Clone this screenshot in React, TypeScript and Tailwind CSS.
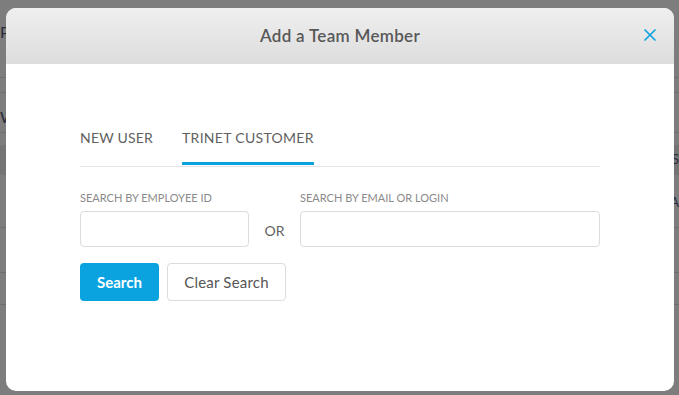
import { X } from 'lucide-react'

export default function App() {
    return (
        <div className="relative w-[679px] h-[395px] overflow-hidden bg-[#7d7d7d] font-['Lato',sans-serif]">
            {/* page underneath the overlay */}
            <div className="flex flex-col text-[#2b2b3a]">
                <div className="h-[78px] border-b border-[#6e6e6e] pt-[20px] px-0 text-[16px]">P</div>
                <div className="h-[15px] border-b border-[#6e6e6e]" />
                <div className="h-[40px] border-b border-[#6e6e6e] pt-[12px] text-[16px]">W</div>
                <div className="h-[12px]" />
                <div className="h-[30px] bg-[#747474] flex justify-end items-center text-[13px]">S</div>
                <div className="h-[53px] border-b border-[#6e6e6e] flex justify-end pt-[18px] text-[13px]">A</div>
                <div className="h-[45px] border-b border-[#6e6e6e]" />
                <div className="h-[32px] border-b border-[#6e6e6e]" />
            </div>

            {/* modal */}
            <div className="absolute left-[6px] top-[8px] w-[668px] h-[383px] bg-white rounded-[10px] overflow-hidden flex flex-col">
                <div className="h-[56px] shrink-0 bg-gradient-to-b from-[#efefef] to-[#dddddd] flex items-center justify-center relative">
                    <h2 className="text-[17px] font-semibold text-[#585858] tracking-[0.3px]">Add a Team Member</h2>
                    <button className="absolute right-[14px] top-[17px] text-[#0aa3e0]">
                        <X size={20} strokeWidth={2} />
                    </button>
                </div>

                <div className="px-[74px] pt-[62px]">
                    <div className="flex gap-[29px] border-b border-[#e3e3e3] h-[41px]">
                        <div className="text-[14px] text-[#616161] tracking-[0.2px] pt-[1px]">NEW USER</div>
                        <div className="text-[14px] text-[#616161] tracking-[0.3px] pt-[1px] border-b-[3px] border-[#0aa3e0] h-[39px] -mb-[1px]">TRINET CUSTOMER</div>
                    </div>

                    <div className="flex items-end mt-[24px]">
                        <div className="flex flex-col w-[169px]">
                            <label className="text-[11px] text-[#8a8a8a] leading-[12px] mb-[7px] pt-[1px]">SEARCH BY EMPLOYEE ID</label>
                            <input className="h-[36px] border border-[#dcdcdc] rounded-[4px] outline-none" />
                        </div>
                        <div className="w-[51px] h-[36px] flex items-center justify-center text-[14px] text-[#616161] pt-[2px]">OR</div>
                        <div className="flex flex-col flex-1">
                            <label className="text-[11px] text-[#8a8a8a] leading-[12px] mb-[7px] pt-[1px]">SEARCH BY EMAIL OR LOGIN</label>
                            <input className="h-[36px] border border-[#dcdcdc] rounded-[4px] outline-none" />
                        </div>
                    </div>

                    <div className="flex gap-[8px] mt-[16px]">
                        <button className="w-[79px] h-[38px] rounded-[4px] bg-[#0aa3e0] text-white text-[15px] font-bold">Search</button>
                        <button className="w-[119px] h-[38px] rounded-[4px] border border-[#dcdcdc] text-[#555] text-[15px] tracking-[0.2px]">Clear Search</button>
                    </div>
                </div>
            </div>
        </div>
    )
}
